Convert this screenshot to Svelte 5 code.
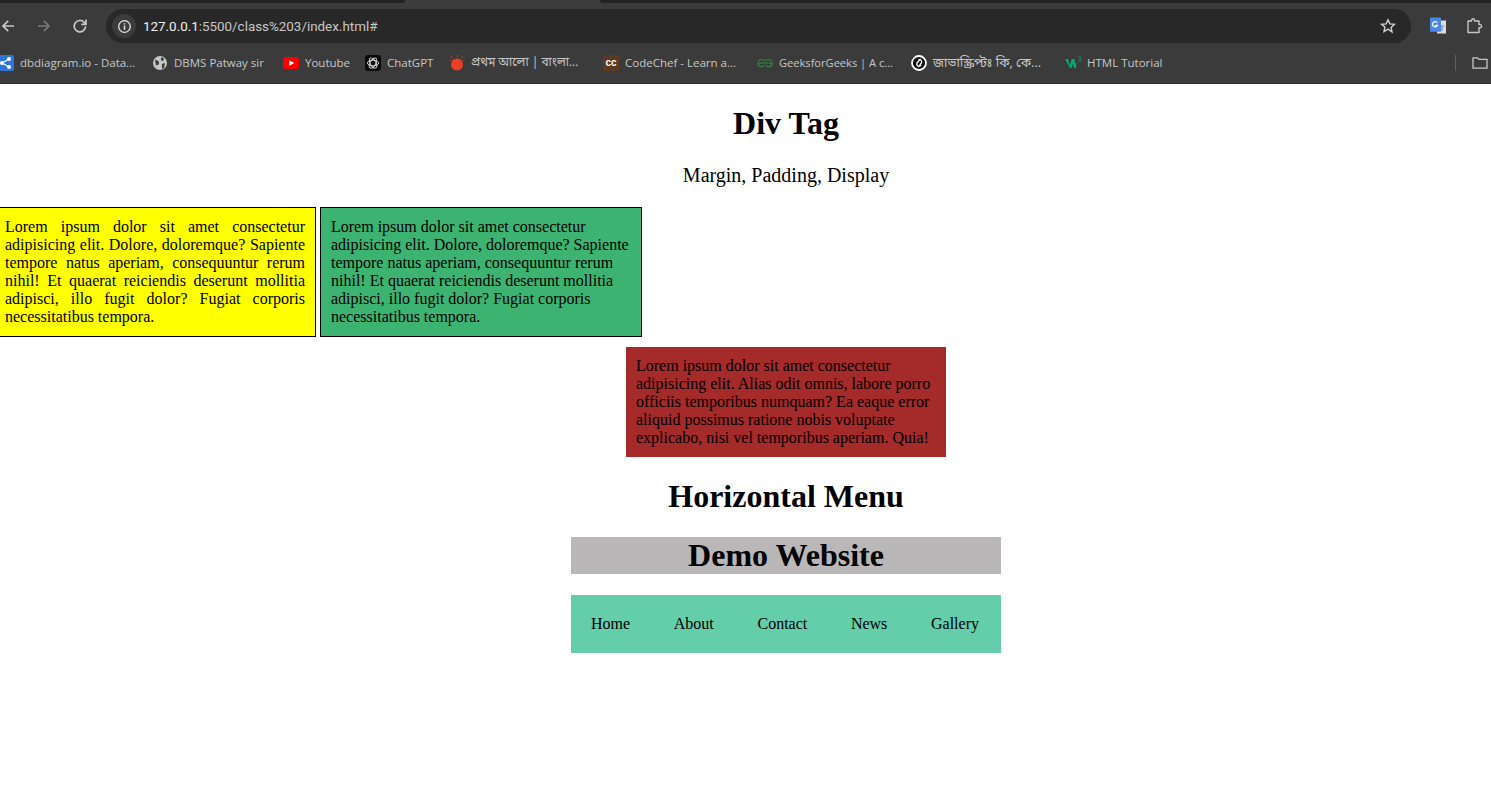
<script>
  const bookmarks = [
    { id: 'db', label: 'dbdiagram.io - Data...', w: 154, cls: '' },
    { id: 'globe', label: 'DBMS Patway sir', w: 131, cls: '' },
    { id: 'yt', label: 'Youtube', w: 82, cls: '' },
    { id: 'gpt', label: 'ChatGPT', w: 84, cls: '' },
    { id: 'pa', label: 'প্রথম আলো | বাংলা...', w: 154, cls: 'bn' },
    { id: 'cc', label: 'CodeChef - Learn a...', w: 154, cls: '' },
    { id: 'gfg', label: 'GeeksforGeeks | A c...', w: 154, cls: 'tight' },
    { id: 'js', label: 'জাভাস্ক্রিপ্টঃ কি, কে...', w: 154, cls: 'bn-lg' },
    { id: 'w3', label: 'HTML Tutorial', w: 120, cls: '' }
  ];
  const lorem1 = 'Lorem ipsum dolor sit amet consectetur adipisicing elit. Dolore, doloremque? Sapiente tempore natus aperiam, consequuntur rerum nihil! Et quaerat reiciendis deserunt mollitia adipisci, illo fugit dolor? Fugiat corporis necessitatibus tempora.';
  const lorem2 = 'Lorem ipsum dolor sit amet consectetur adipisicing elit. Alias odit omnis, labore porro officiis temporibus numquam? Ea eaque error aliquid possimus ratione nobis voluptate explicabo, nisi vel temporibus aperiam. Quia!';
  const menu = ['Home', 'About', 'Contact', 'News', 'Gallery'];
</script>

<div class="chrome">
  <div class="tabstrip"><div class="tab-a"></div><div class="tab-b"></div></div>
  <div class="toolbar">
    <svg class="nav-ic" viewBox="0 0 16 16"><path d="M14 8H3.2M8.2 2.8 3 8l5.2 5.2" fill="none" stroke="#c7c7c7" stroke-width="1.7"/></svg>
    <svg class="nav-ic" viewBox="0 0 16 16"><path d="M2 8h10.8M7.8 2.8 13 8l-5.2 5.2" fill="none" stroke="#777" stroke-width="1.7"/></svg>
    <svg class="nav-ic reload" viewBox="0 0 16 16"><path d="M13.6 8.4A5.7 5.7 0 1 1 12 4.2L14 6.2M14 1.6v4.8H9.2" fill="none" stroke="#c7c7c7" stroke-width="1.7"/></svg>
    <div class="omnibox">
      <span class="info"><svg viewBox="0 0 16 16" width="15" height="15"><circle cx="8" cy="8" r="6.2" fill="none" stroke="#e3e3e3" stroke-width="1.4"/><path d="M8 7v4.4M8 4.4v1.5" stroke="#e3e3e3" stroke-width="1.6"/></svg></span>
      <span class="url"><b>127.0.0.1</b>:5500/class%203/index.html#</span>
      <svg class="star" viewBox="0 0 16 16" width="16" height="16"><path d="m8 1.8 1.9 4.1 4.5.5-3.3 3.1.9 4.5L8 11.2l-4 2.3.9-4.5L1.6 6.4l4.5-.5z" fill="none" stroke="#d0d0d0" stroke-width="1.4"/></svg>
    </div>
    <svg class="gt" viewBox="0 0 18 18" width="18" height="18"><rect x="8" y="3.5" width="9" height="13" fill="#d9dde3"/><path d="M10.5 9h5M13 9v5" stroke="#7d8a94" stroke-width="1.2"/><rect x="1" y="0.5" width="11" height="14.3" rx="0.5" fill="#4a86e8"/><path d="M8.1 5.6A2.6 2.6 0 1 0 8.5 8.4H6.1" fill="none" stroke="#fff" stroke-width="1.2"/></svg>
    <svg class="ext" viewBox="0 0 16 16" width="16" height="16"><path d="M1 3h3.6V2.2a1.5 1.5 0 0 1 3 0V3H12v3.6h1a1.6 1.6 0 0 1 0 3.2h-1v4.7H1z" fill="none" stroke="#c7c7c7" stroke-width="1.4" stroke-linejoin="round"/></svg>
  </div>
  <div class="bookbar">
    {#each bookmarks as b}
      <div class="bm" style="width:{b.w}px">
        <span class="fav">
          {#if b.id === 'db'}
            <svg viewBox="0 0 16 16"><rect width="16" height="16" rx="2" fill="#2f74d8"/><path d="M4 8l7-4M4 8l7 4" stroke="#fff" stroke-width="1.2"/><circle cx="4" cy="8" r="2" fill="#fff"/><circle cx="11" cy="4" r="2" fill="#fff"/><circle cx="11" cy="12" r="2" fill="#fff"/></svg>
          {:else if b.id === 'globe'}
            <svg viewBox="0 0 16 16"><circle cx="8" cy="8" r="7" fill="#c4c7c5"/><path d="M3 4.4l3.6 1.8.4 3-3 1.4zM9 2.2l3 1-1 3-2-1zM10 9l3-1-1 4.8-2 1.2z" fill="#3b3b3b"/></svg>
          {:else if b.id === 'yt'}
            <svg viewBox="0 0 16 16"><rect y="2" width="16" height="12" rx="3" fill="#f00"/><path d="M6.4 5.2v5.6L11.2 8z" fill="#fff"/></svg>
          {:else if b.id === 'gpt'}
            <svg viewBox="0 0 16 16"><rect width="16" height="16" rx="3" fill="#0b0b0b"/><g fill="none" stroke="#ddd" stroke-width="0.9"><ellipse cx="8" cy="8" rx="5.6" ry="2.8"/><ellipse cx="8" cy="8" rx="5.6" ry="2.8" transform="rotate(60 8 8)"/><ellipse cx="8" cy="8" rx="5.6" ry="2.8" transform="rotate(120 8 8)"/></g></svg>
          {:else if b.id === 'pa'}
            <svg viewBox="0 0 16 16"><circle cx="8" cy="9.6" r="6" fill="#ea3f24"/><path d="M8 0v2.4M2.2 1.2l1.4 2M13.8 1.2l-1.4 2M0.4 5l2 .8M15.6 5l-2 .8" stroke="#b5402c" stroke-width="1"/></svg>
          {:else if b.id === 'cc'}
            <span class="cc">cc</span>
          {:else if b.id === 'gfg'}
            <svg viewBox="0 0 16 16"><path d="M8 8h7.2a3.6 3.6 0 0 1-6.6 2M8 8H.8a3.6 3.6 0 0 0 6.6 2M7.4 6A3.6 3.6 0 0 0 1.2 6.6M8.6 6a3.6 3.6 0 0 1 6.2.6" fill="none" stroke="#2f8d46" stroke-width="1.2"/></svg>
          {:else if b.id === 'js'}
            <svg viewBox="0 0 16 16"><circle cx="8" cy="8" r="7" fill="#111" stroke="#fff" stroke-width="1.8"/><path d="M9.6 3.8 6 8a2.2 2.2 0 0 0 3 3l1-1.2M7.4 12.2 10.4 8a2.2 2.2 0 0 0-3-3" fill="none" stroke="#fff" stroke-width="1.3"/></svg>
          {:else}
            <svg viewBox="0 0 16 16"><path d="M0 4h3l1.8 6.2L6.8 4h2.4l2 6.2L13 4h0l-2.2 9H9L8 8.4 6.6 13H5z" fill="#04aa6d"/><path d="M13.6 2h2v1.2l-1 .8h1v1.6h-2" fill="none" stroke="#04aa6d" stroke-width="0.7"/></svg>
          {/if}
        </span>
        <span class="bm-label {b.cls}">{b.label}</span>
      </div>
    {/each}
    <div class="sep"></div>
    <svg class="folder" viewBox="0 0 16 16" width="16" height="16"><path d="M1 2.8h4.6l1.4 1.6h8v8.8H1z" fill="none" stroke="#c7c7c7" stroke-width="1.3"/></svg>
  </div>
</div>

<main class="page">
  <h1>Div Tag</h1>
  <p class="sub">Margin, Padding, Display</p>
  <div class="boxes">
    <div class="box yellow">{lorem1}</div>
    <div class="box green">{lorem1}</div>
  </div>
  <div class="red">{lorem2}</div>
  <h1>Horizontal Menu</h1>
  <div class="site">
    <header class="site-head"><h1 class="demo">Demo Website</h1></header>
    <nav class="menu">
      {#each menu as m}<a href="#top">{m}</a>{/each}
    </nav>
  </div>
</main>

<style>
  :global(html), :global(body) { overflow: hidden; }
  :global(body) { margin: 0; background: #fff; }
  .chrome { height: 84px; width: 1491px; background: #3b3b3b; font-family: "Open Sans", "Noto Sans", "Noto Sans Bengali", sans-serif; color: #e3e3e3; box-sizing: border-box; border-bottom: 1px solid #2f2f2f; }
  .tabstrip { height: 3px; display: flex; justify-content: space-between; }
  .tab-a { width: 405px; background: #212423; border-radius: 0 0 5px 0; }
  .tab-b { width: 891px; background: #212423; border-radius: 0 0 0 5px; }
  .toolbar { height: 34px; margin-top: 6px; display: flex; align-items: center; }
  .nav-ic { width: 16px; height: 16px; margin-right: 20px; flex: none; }
  .nav-ic.reload { margin-right: 18px; }
  .omnibox { width: 1305px; height: 34px; border-radius: 17px; background: #282828; display: flex; align-items: center; flex: none; box-sizing: border-box; padding: 0 15px 0 6px; }
  .info { width: 24px; height: 24px; border-radius: 50%; background: #3b3b3b; display: flex; align-items: center; justify-content: center; flex: none; }
  .url { margin-left: 7px; font-family: Roboto, "Open Sans", sans-serif; font-size: 13.4px; color: #c7c7c7; flex: 1; white-space: nowrap; }
  .url b { font-weight: 400; color: #f0f0f0; }
  .gt { margin-left: 18px; flex: none; }
  .ext { margin-left: 20px; flex: none; }
  .bookbar { height: 40px; display: flex; align-items: center; }
  .bm { display: flex; align-items: center; flex: none; font-size: 11.5px; color: #c7c7c7; white-space: nowrap; }
  .bm:first-child { margin-left: -2px; }
  .bm-label { position: relative; top: -1px; }
  .bn { font-size: 12px; }
  .bn-lg { font-size: 12.8px; }
  .tight { font-size: 11.1px; }
  .fav { width: 16px; height: 16px; margin-right: 6px; flex: none; display: block; }
  .fav svg { display: block; width: 16px; height: 16px; }
  .cc { display: block; width: 16px; height: 16px; background: #5c3a21; color: #fff; font: bold 10px/15px "Liberation Sans", sans-serif; text-align: center; }
  .sep { width: 1px; height: 16px; background: #5f5f5f; margin-left: auto; }
  .folder { margin: 0 3px 0 16px; flex: none; }

  .page { width: 1572px; font-family: "Liberation Serif", serif; color: #000; font-size: 16px; line-height: normal; }
  h1 { font-size: 32px; font-weight: 700; text-align: center; margin: 21.44px 0; }
  .sub { font-size: 20px; text-align: center; margin: 20px 0; }
  .boxes { display: flex; gap: 4px; margin-left: -6px; }
  .box { width: 300px; padding: 10px; border: 1px solid #000; flex: none; line-height: 18px; }
  .yellow { background: #ff0; text-align: justify; }
  .green { background: #3cb371; }
  .red { width: 300px; padding: 10px; margin: 10px auto; background: #a52a2a; line-height: 18px; }
  .site { width: 430px; margin: 0 auto; }
  .site-head { background: #b9b7b8; }
  .demo { margin: 0; }
  .menu { margin-top: 21px; padding: 20px 22px 20px 20px; background: #64cdaa; display: flex; justify-content: space-between; line-height: 18px; }
  .menu a { color: #000; text-decoration: none; }
</style>
